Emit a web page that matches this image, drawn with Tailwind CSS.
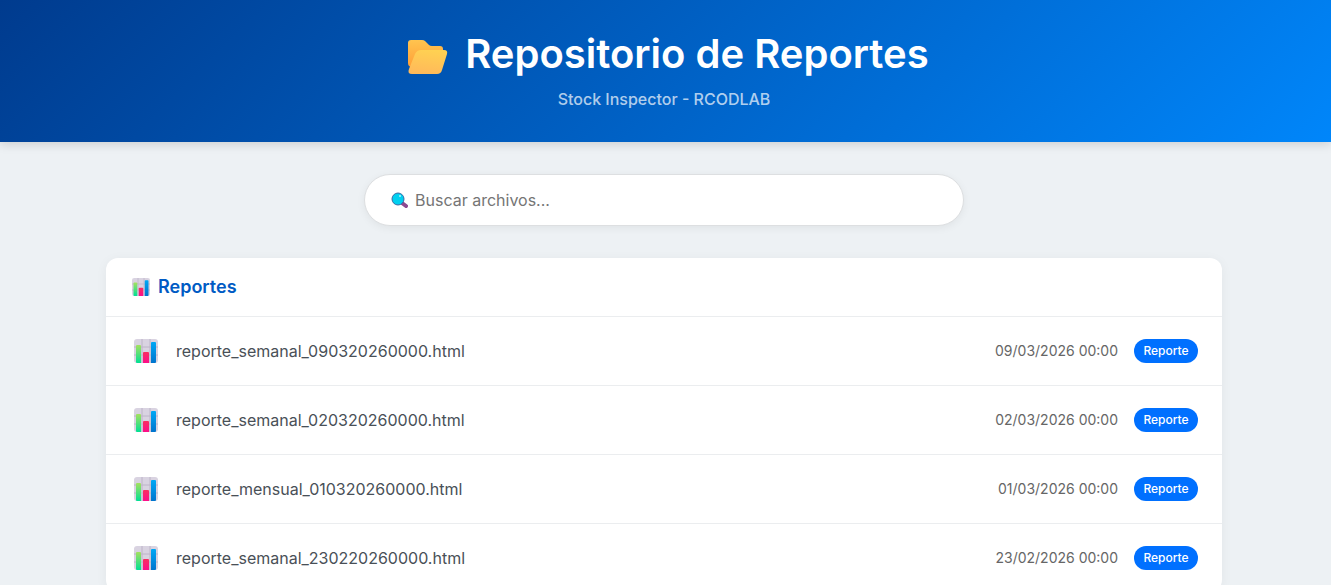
<!DOCTYPE html>
<html lang="es">
<head>
    <meta charset="UTF-8">
    <meta name="viewport" content="width=device-width, initial-scale=1.0">
    <title>Repositorio de Reportes</title>
    <script src="https://cdn.jsdelivr.net/npm/@tailwindcss/browser@4"></script>
</head>
<body class="bg-[#edf1f4] text-[#495057] font-['Inter',sans-serif] min-h-screen overflow-x-hidden">
    <!-- Shared icons -->
    <svg class="absolute w-0 h-0" aria-hidden="true">
        <defs>
            <linearGradient id="green" x1="0" y1="0" x2="0" y2="1">
                <stop offset="0" stop-color="#a5e05f"/><stop offset="1" stop-color="#00e094"/>
            </linearGradient>
            <linearGradient id="pink" x1="0" y1="0" x2="0" y2="1">
                <stop offset="0" stop-color="#f92f60"/><stop offset="1" stop-color="#fb0d8a"/>
            </linearGradient>
            <linearGradient id="blue" x1="0" y1="0" x2="0" y2="1">
                <stop offset="0" stop-color="#00a8f5"/><stop offset="1" stop-color="#0074cd"/>
            </linearGradient>
            <symbol id="chart" viewBox="0 0 24 24">
                <rect width="24" height="24" rx="3" fill="#d9d3e1"/>
                <path d="M0 8h24M0 16h24M8 0v24M16 0v24" stroke="#bdb4c8" stroke-width="1"/>
                <path d="M3 6h3a1 1 0 0 1 1 1v17H3a1 1 0 0 1-1-1V7a1 1 0 0 1 1-1z" fill="url(#green)"/>
                <path d="M10 13h4a1 1 0 0 1 1 1v10H9V14a1 1 0 0 1 1-1z" fill="url(#pink)"/>
                <path d="M18 3h3a1 1 0 0 1 1 1v19a1 1 0 0 1-1 1h-4V4a1 1 0 0 1 1-1z" fill="url(#blue)"/>
            </symbol>
        </defs>
    </svg>

    <header class="bg-[linear-gradient(135deg,#003b8e_0%,#0086fa_100%)] pt-7 pb-8 pr-[3px] text-center text-white shadow-[0_2px_10px_rgba(0,0,0,0.15)]">
        <h1 class="flex items-center justify-center gap-4 pl-2 text-[40px] leading-[52px] font-semibold">
            <svg class="w-[42px] h-[42px] mt-2" viewBox="0 0 42 42">
                <defs>
                    <linearGradient id="back" x1="0" y1="0" x2="0" y2="1">
                        <stop offset="0" stop-color="#ffc44f"/><stop offset="1" stop-color="#ff9f38"/>
                    </linearGradient>
                    <linearGradient id="front" x1="0.6" y1="0" x2="0.4" y2="1">
                        <stop offset="0" stop-color="#ffd152"/><stop offset="1" stop-color="#ffb95a"/>
                    </linearGradient>
                </defs>
                <path d="M4 3h11q2 0 3 1l4 4q1 1 3 1h8q3 0 3 3v18H5q-4 0-4-4V6q0-3 3-3z" fill="url(#back)"/>
                <path d="M14 13h23q4 0 3 4l-5 16q-1 4-5 4H5q-5 0-3-5l6-15q2-4 6-4z" fill="url(#front)"/>
            </svg>
            Repositorio de Reportes
        </h1>
        <p class="mt-2 text-base leading-[22px] font-medium text-white/70">Stock Inspector - RCODLAB</p>
    </header>

    <main class="pt-8 pr-[3px] pb-8">
        <div class="relative w-full max-w-[600px] mx-auto">
            <svg class="absolute left-[26px] top-[17px] w-[18px] h-[18px]" viewBox="0 0 18 18">
                <path d="M12 12l4 3" stroke="#8c4a90" stroke-width="4" stroke-linecap="round"/>
                <circle cx="8" cy="8" r="6" fill="#00d0f0" stroke="#376ba5" stroke-width="1"/>
                <circle cx="10" cy="5" r="1" fill="#a8f5ff"/>
            </svg>
            <input type="text" id="search" aria-label="Buscar archivos" placeholder="Buscar archivos..." class="block w-full h-[52px] pl-[50px] pr-6 text-base bg-white border border-[#dddfe1] rounded-full shadow-[0_2px_8px_rgba(0,0,0,0.06)] placeholder:text-[#757575] outline-none">
        </div>

        <section class="w-full max-w-[1116px] mx-auto mt-8 bg-white rounded-xl overflow-hidden shadow-[0_2px_12px_rgba(0,0,0,0.05)]">
            <h2 class="flex items-center gap-2 h-[58px] pl-[26px] text-lg font-semibold text-[#005bc4]">
                <svg class="w-[18px] h-[18px]"><use href="#chart"/></svg>
                Reportes
            </h2>
            <ul id="file-list">
                <li class="flex items-center h-[69px] pl-7 pr-6 border-t border-[#ebedef]">
                    <svg class="w-6 h-6"><use href="#chart"/></svg>
                    <a href="#" class="ml-[18px] flex-1">reporte_semanal_090320260000.html</a>
                    <span class="text-sm text-[#666666]">09/03/2026 00:00</span>
                    <span class="ml-4 w-16 h-6 rounded-full bg-[#0070ff] text-center text-xs leading-6 font-medium text-white">Reporte</span>
                </li>
                <li class="flex items-center h-[69px] pl-7 pr-6 border-t border-[#ebedef]">
                    <svg class="w-6 h-6"><use href="#chart"/></svg>
                    <a href="#" class="ml-[18px] flex-1">reporte_semanal_020320260000.html</a>
                    <span class="text-sm text-[#666666]">02/03/2026 00:00</span>
                    <span class="ml-4 w-16 h-6 rounded-full bg-[#0070ff] text-center text-xs leading-6 font-medium text-white">Reporte</span>
                </li>
                <li class="flex items-center h-[69px] pl-7 pr-6 border-t border-[#ebedef]">
                    <svg class="w-6 h-6"><use href="#chart"/></svg>
                    <a href="#" class="ml-[18px] flex-1">reporte_mensual_010320260000.html</a>
                    <span class="text-sm text-[#666666]">01/03/2026 00:00</span>
                    <span class="ml-4 w-16 h-6 rounded-full bg-[#0070ff] text-center text-xs leading-6 font-medium text-white">Reporte</span>
                </li>
                <li class="flex items-center h-[69px] pl-7 pr-6 border-t border-[#ebedef]">
                    <svg class="w-6 h-6"><use href="#chart"/></svg>
                    <a href="#" class="ml-[18px] flex-1">reporte_semanal_230220260000.html</a>
                    <span class="text-sm text-[#666666]">23/02/2026 00:00</span>
                    <span class="ml-4 w-16 h-6 rounded-full bg-[#0070ff] text-center text-xs leading-6 font-medium text-white">Reporte</span>
                </li>
            </ul>
        </section>
    </main>
</body>
</html>
